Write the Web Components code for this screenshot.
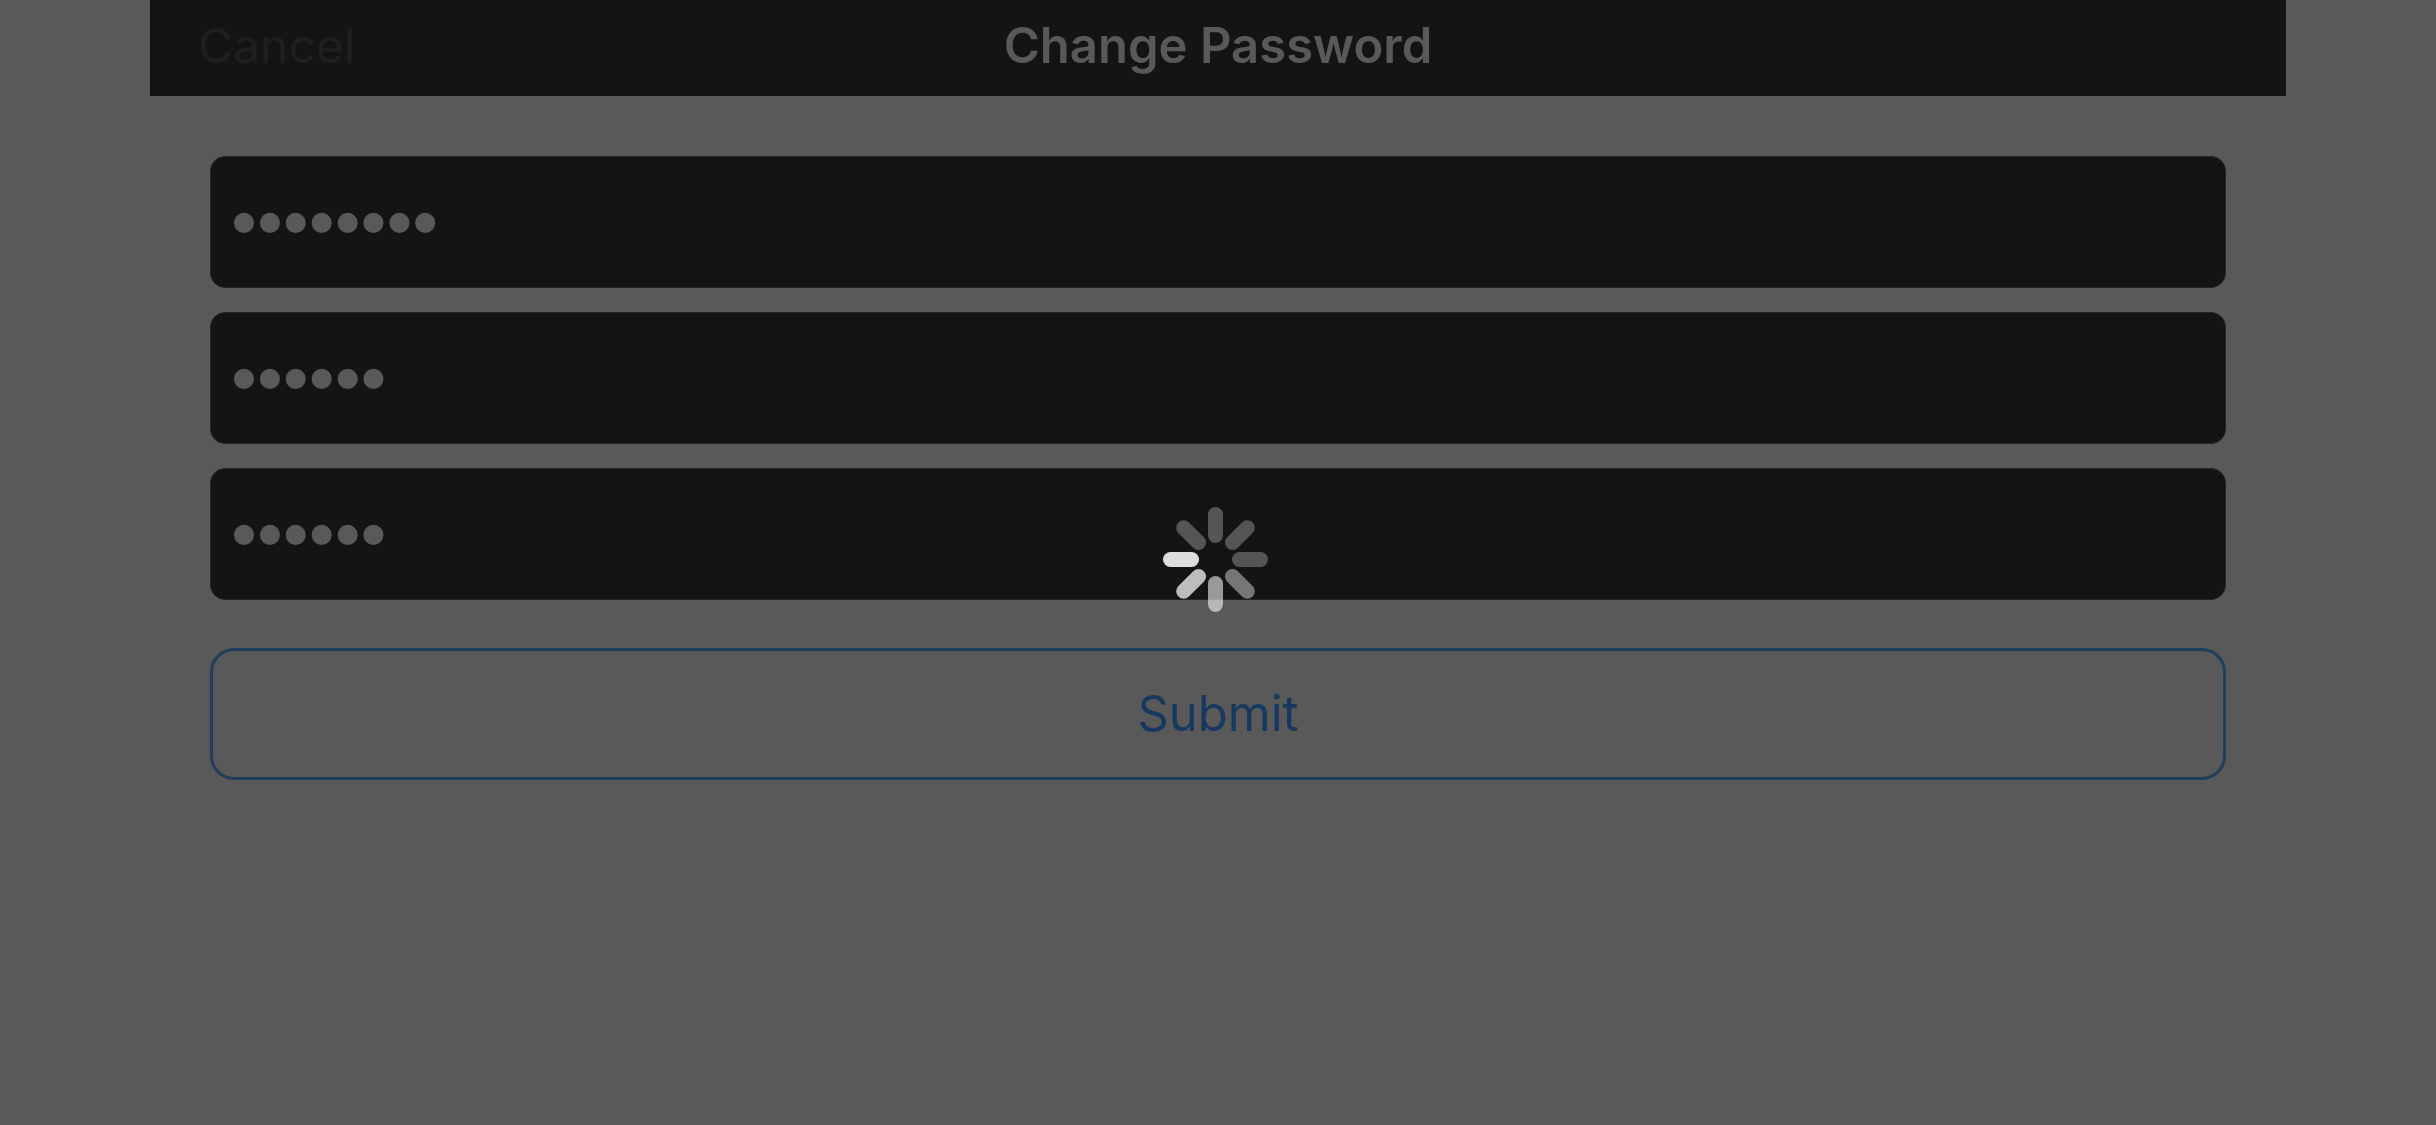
<!DOCTYPE html>
<html lang="en">
<head>
<meta charset="utf-8">
<meta name="viewport" content="width=device-width, initial-scale=1">
<title>Change Password</title>
<style>
  body { margin: 0; background: #595959; font-family: Inter, "Liberation Sans", sans-serif; }
</style>
</head>
<body>
<password-screen></password-screen>
<script>
class NavBar extends HTMLElement {
  constructor() {
    super();
    this.attachShadow({ mode: 'open' }).innerHTML = `
      <style>
        :host { display: block; background: #141414; }
        header { display: grid; grid-template-columns: 1fr auto 1fr; align-items: center; height: 96px; padding: 0 48px 4px; box-sizing: border-box; }
        button { justify-self: start; border: 0; padding: 0; background: none; color: #1f1f1f; font: 400 48px/60px Inter, "Liberation Sans", sans-serif; }
        h1 { margin: 0; color: #595959; font-size: 49px; line-height: 60px; font-weight: 600; }
      </style>
      <header>
        <button type="button">Cancel</button>
        <h1><slot></slot></h1>
      </header>`;
  }
}
customElements.define('nav-bar', NavBar);

class PasswordField extends HTMLElement {
  constructor() {
    super();
    this.attachShadow({ mode: 'open' }).innerHTML = `
      <style>
        :host { display: block; }
        input { display: block; width: 100%; height: 132px; box-sizing: border-box; margin: 0; padding: 0 20px; border: 1px solid #242424; border-radius: 15px; outline: 0; background: #141414; color: #595959; font: 74px/84px "Liberation Sans", sans-serif; }
      </style>
      <input type="password">`;
  }
  connectedCallback() {
    const input = this.shadowRoot.querySelector('input');
    input.setAttribute('aria-label', this.getAttribute('label'));
    input.value = this.getAttribute('value');
  }
}
customElements.define('password-field', PasswordField);

class SubmitButton extends HTMLElement {
  constructor() {
    super();
    this.attachShadow({ mode: 'open' }).innerHTML = `
      <style>
        :host { display: block; }
        button { display: block; width: 100%; height: 132px; box-sizing: border-box; padding: 0; border: 3px solid #223e5d; border-radius: 24px; background: none; color: #17385f; font: 400 49px/60px Inter, "Liberation Sans", sans-serif; }
      </style>
      <button type="submit"><slot></slot></button>`;
  }
}
customElements.define('submit-button', SubmitButton);

class LoadingOverlay extends HTMLElement {
  constructor() {
    super();
    const shades = [.28, .28, .28, .42, .57, .72, .86, .28];
    const bars = shades.map((o, i) =>
      `<rect x="45" y="0" width="15" height="36" rx="7.5" fill="#fff" fill-opacity="${o}" transform="rotate(${i * 45} 52.5 52.5)"/>`).join('');
    this.attachShadow({ mode: 'open' }).innerHTML = `
      <style>
        :host { position: fixed; inset: 0; display: flex; align-items: center; justify-content: center; }
        div { width: 111px; height: 111px; }
        svg { display: block; width: 105px; height: 105px; }
      </style>
      <div role="status" aria-busy="true"><svg viewBox="0 0 105 105" aria-hidden="true">${bars}</svg></div>`;
  }
}
customElements.define('loading-overlay', LoadingOverlay);

class PasswordScreen extends HTMLElement {
  constructor() {
    super();
    this.attachShadow({ mode: 'open' }).innerHTML = `
      <style>
        :host { display: block; min-height: 100vh; padding: 0 150px; box-sizing: border-box; }
        form { display: flex; flex-direction: column; gap: 24px; padding: 60px; }
        submit-button { margin-top: 24px; }
      </style>
      <nav-bar>Change Password</nav-bar>
      <form>
        <password-field label="Current password" value="12345678"></password-field>
        <password-field label="New password" value="123456"></password-field>
        <password-field label="Confirm new password" value="123456"></password-field>
        <submit-button>Submit</submit-button>
      </form>
      <loading-overlay></loading-overlay>`;
  }
}
customElements.define('password-screen', PasswordScreen);
</script>
</body>
</html>
